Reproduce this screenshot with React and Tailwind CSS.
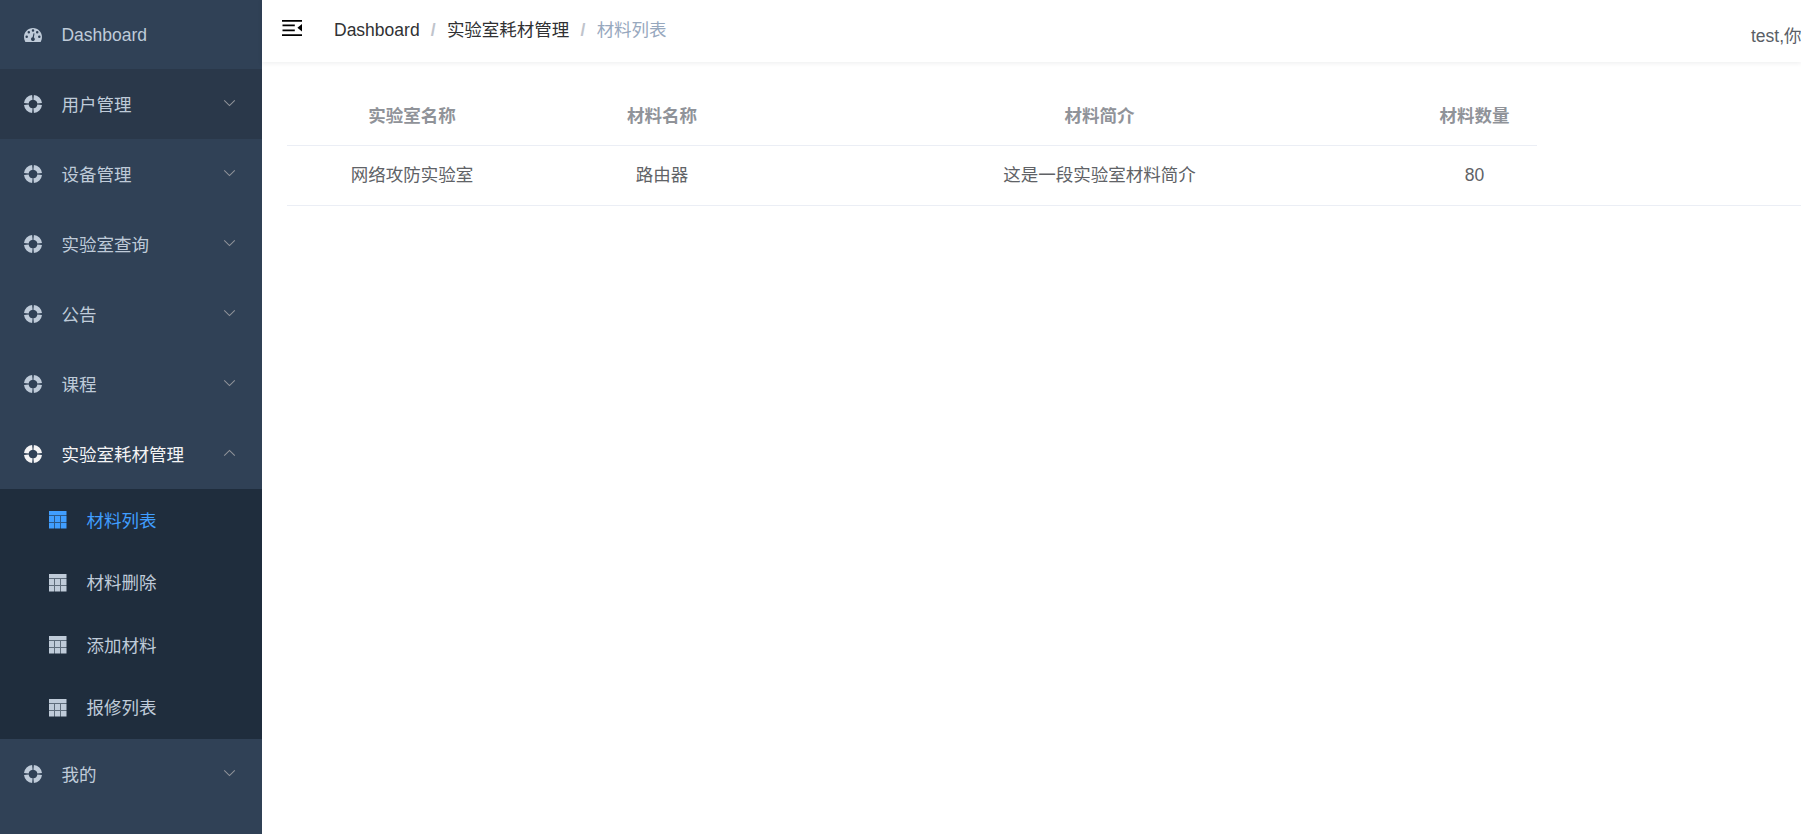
import React from "react";

function GaugeIcon({ className }) {
  return (
    <svg className={className} width="18" height="18" viewBox="0 0 18 18" fill="currentColor">
      <path
        fillRule="evenodd"
        d="M9 2C4 2 0 6 0 11c0 1.6.4 3.1 1.1 4.4.2.3.5.6.9.6h14c.4 0 .7-.3.9-.6.7-1.3 1.1-2.8 1.1-4.4 0-5-4-9-9-9ZM9 3.3a1.25 1.25 0 1 1 0 2.5a1.25 1.25 0 0 1 0-2.5ZM4.8 5.1a1.25 1.25 0 1 1 0 2.5a1.25 1.25 0 0 1 0-2.5ZM13.2 5.1a1.25 1.25 0 1 1 0 2.5a1.25 1.25 0 0 1 0-2.5ZM2.7 9.5a1.25 1.25 0 1 1 0 2.5a1.25 1.25 0 0 1 0-2.5ZM15.3 9.5a1.25 1.25 0 1 1 0 2.5a1.25 1.25 0 0 1 0-2.5ZM9.5 7.2l1 .2-.7 4.1a1.9 1.9 0 1 1-1.2-.2Z"
      />
    </svg>
  );
}

function RingIcon({ className }) {
  return (
    <svg className={className} width="18" height="18" viewBox="0 0 18 18" fill="none" stroke="currentColor">
      <path
        strokeWidth="4.7"
        d="M9.65 2.35A6.7 6.7 0 0 1 15.65 8.35M15.65 9.65A6.7 6.7 0 0 1 9.65 15.65M8.35 15.65A6.7 6.7 0 0 1 2.35 9.65M2.35 8.35A6.7 6.7 0 0 1 8.35 2.35"
      />
    </svg>
  );
}

function GridIcon({ className }) {
  return (
    <svg className={className} width="18" height="18" viewBox="0 0 18 18" fill="currentColor">
      <path d="M0 0h17.5v4H0zM0 5h5v6H0zM6 5h5v6H6zM12 5h5.5v6H12zM0 12h5v5.6H0zM6 12h5v5.6H6zM12 12h5.5v5.6H12z" />
      <path opacity=".4" d="M0 4h17.5v1H0zM0 11h17.5v1H0zM5 5h1v6H5zM11 5h1v6h-1zM5 12h1v5.6H5zM11 12h1v5.6h-1z" />
    </svg>
  );
}

function Chevron({ up }) {
  return (
    <svg
      className="mt-[-3px] shrink-0 text-[#909399]"
      width="13"
      height="8"
      viewBox="0 0 13 8"
      fill="none"
      stroke="currentColor"
      strokeWidth="1.1"
    >
      <path d={up ? "M1.2 6.6L6.5 1.4L11.8 6.6" : "M1.2 1.4L6.5 6.6L11.8 1.4"} />
    </svg>
  );
}

function CollapseIcon() {
  return (
    <svg className="-mt-0.5 shrink-0" width="20" height="18" viewBox="0 0 20 18" fill="#000">
      <path d="M0 .9h20v1.8H0zM.5 5.4h12.3v1.8H.5zM.5 10.4h12.3v1.8H.5zM0 15.2h20V17H0zM20 5v7.6L15.4 8.8z" />
    </svg>
  );
}

function MenuItem({ label, active, open, hover }) {
  return (
    <li
      className={`flex h-[70px] items-center pl-6 pr-[26px] ${hover ? "bg-[#2a384a]" : ""} ${
        active ? "text-[#f4f4f5]" : "text-[#bfcbd9]"
      }`}
    >
      <RingIcon className="mr-[19.4px] shrink-0" />
      <span className="mt-px flex-1">{label}</span>
      <Chevron up={open} />
    </li>
  );
}

const menus = [
  { label: "用户管理", hover: true },
  { label: "设备管理" },
  { label: "实验室查询" },
  { label: "公告" },
  { label: "课程" },
  { label: "实验室耗材管理", active: true, open: true },
];

const subMenus = ["材料列表", "材料删除", "添加材料", "报修列表"];

function Sidebar() {
  return (
    <aside className="w-[262px] shrink-0 bg-[#304156] text-[#bfcbd9]">
      <ul>
        <li className="flex h-[69px] items-center pl-6">
          <GaugeIcon className="mr-[19.4px] shrink-0" />
          <span>Dashboard</span>
        </li>
        {menus.map((m) => (
          <MenuItem key={m.label} {...m} />
        ))}
        <li>
          <ul className="bg-[#1f2d3d]">
            {subMenus.map((label, i) => (
              <li
                key={label}
                className={`flex h-[62.5px] items-center pl-[49px] ${i === 0 ? "text-[#409eff]" : ""}`}
              >
                <GridIcon className="mr-[19.4px] shrink-0" />
                <span className="mt-px">{label}</span>
              </li>
            ))}
          </ul>
        </li>
        <MenuItem label="我的" />
      </ul>
    </aside>
  );
}

function Navbar() {
  return (
    <header className="flex h-[62px] shrink-0 items-start bg-white pl-5 shadow-[0_1px_5px_rgba(0,21,41,0.08)]">
      <div className="flex h-[58px] flex-1 items-center">
        <CollapseIcon />
        <nav className="ml-8 flex gap-[11.2px] pt-px text-[#303133]">
          <span>Dashboard</span>
          <span className="font-bold text-[#c0c4cc]">/</span>
          <span>实验室耗材管理</span>
          <span className="font-bold text-[#c0c4cc]">/</span>
          <span className="text-[#97a8be]">材料列表</span>
        </nav>
      </div>
      <span className="w-[50px] whitespace-nowrap pt-6 text-[#5a5e66]">test,你</span>
    </header>
  );
}

function MaterialTable() {
  return (
    <section className="ml-[25px] mt-6 text-[#606266]">
      <div className="grid h-[60px] w-[1250px] grid-cols-[250px_250px_625px_125px] items-center border-b border-[#ebeef5] text-center font-bold text-[#909399]">
        <span>实验室名称</span>
        <span>材料名称</span>
        <span>材料简介</span>
        <span>材料数量</span>
      </div>
      <div className="grid h-[60px] grid-cols-[250px_250px_625px_125px] items-center border-b border-[#ebeef5] pb-0.5 text-center">
        <span>网络攻防实验室</span>
        <span>路由器</span>
        <span>这是一段实验室材料简介</span>
        <span>80</span>
      </div>
    </section>
  );
}

export default function App() {
  return (
    <div className="flex h-screen overflow-hidden bg-white font-['Liberation_Sans','Noto_Sans_CJK_SC',sans-serif] text-[17.5px] leading-6">
      <Sidebar />
      <main className="flex min-w-0 flex-1 flex-col">
        <Navbar />
        <MaterialTable />
      </main>
    </div>
  );
}
